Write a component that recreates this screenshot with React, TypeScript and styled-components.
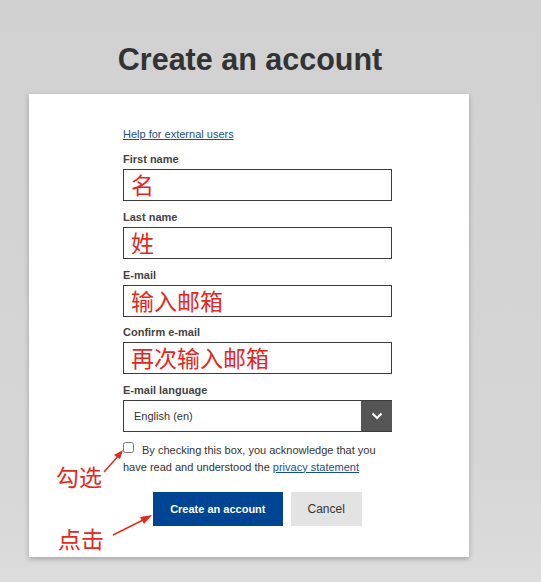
import React from "react";
import styled, { createGlobalStyle } from "styled-components";

const GlobalStyle = createGlobalStyle`
  html, body {
    margin: 0;
    padding: 0;
  }
  body {
    background: linear-gradient(#d1d1d1, #d6d6d6 80%, #dcdcdc);
    min-height: 582px;
    font-family: "Liberation Sans", Arial, sans-serif;
  }
`;

const Page = styled.div`
  width: 440px;
  margin-left: 29px;
  padding-top: 41px;
`;

const Title = styled.h1`
  margin: 0 0 17px;
  padding-left: 2px;
  text-align: center;
  font-size: 30.5px;
  line-height: 36px;
  font-weight: 700;
  color: #333;
`;

const Card = styled.div`
  position: relative;
  background: #fff;
  box-shadow: 0 2px 5px rgba(0, 0, 0, 0.25);
  padding: 33px 0 31px 94px;
`;

const Column = styled.div`
  width: 269px;
  display: flex;
  flex-direction: column;
`;

const HelpLink = styled.a`
  font-size: 11px;
  line-height: 14px;
  color: #1a4f86;
  text-decoration: underline;
  margin-bottom: 11px;
`;

const Field = styled.div`
  display: flex;
  flex-direction: column;
  margin-bottom: 8.75px;
`;

const Label = styled.label`
  font-size: 11px;
  line-height: 14px;
  font-weight: 700;
  color: #444;
  margin-bottom: 3px;
`;

const TextInput = styled.input`
  box-sizing: border-box;
  height: 32px;
  width: 100%;
  margin: 0;
  border: 1px solid #3c3c3c;
  padding: 0 0 2px 7px;
  font-family: "Noto Sans CJK SC", sans-serif;
  font-weight: 400;
  font-size: 23px;
  color: #e3281f;
  outline: none;
`;

const SelectBox = styled.div`
  box-sizing: border-box;
  height: 32px;
  display: flex;
  align-items: stretch;
  border: 1px solid #3c3c3c;
  border-right: none;
`;

const SelectValue = styled.div`
  flex: 1;
  display: flex;
  align-items: center;
  padding-left: 10px;
  font-size: 11px;
  color: #333;
`;

const SelectButton = styled.div`
  width: 31px;
  background: #555;
  display: flex;
  align-items: center;
  justify-content: center;
`;

const Consent = styled.p`
  margin: 1px 0 0;
  font-size: 11px;
  line-height: 17px;
  color: #333;
`;

const Check = styled.input`
  width: 11px;
  height: 11px;
  margin: 0 8px 0 0;
  vertical-align: 1px;
`;

const Privacy = styled.a`
  color: #1a4f86;
  text-decoration: underline;
`;

const Actions = styled.div`
  display: flex;
  justify-content: center;
  gap: 8px;
  margin-top: 16px;
`;

const Button = styled.button<{ $primary?: boolean }>`
  height: 34px;
  border: none;
  padding: 0 ${(p) => (p.$primary ? "17px" : "17px")};
  font-family: "Liberation Sans", Arial, sans-serif;
  font-size: ${(p) => (p.$primary ? "11px" : "12px")};
  font-weight: ${(p) => (p.$primary ? 700 : 400)};
  background: ${(p) => (p.$primary ? "#004494" : "#e3e3e3")};
  color: ${(p) => (p.$primary ? "#fff" : "#333")};
`;

const Note = styled.span<{ $x: number; $y: number }>`
  position: absolute;
  left: ${(p) => p.$x}px;
  top: ${(p) => p.$y}px;
  font-family: "Noto Sans CJK SC", sans-serif;
  font-weight: 400;
  font-size: 23px;
  line-height: 26px;
  color: #e3281f;
`;

const Arrows = styled.svg`
  position: absolute;
  left: 0;
  top: 0;
  pointer-events: none;
`;

export default function App() {
  return (
    <>
      <GlobalStyle />
      <Page>
        <Title>Create an account</Title>
        <Card>
          <Column>
            <HelpLink href="#">Help for external users</HelpLink>
            <Field>
              <Label>First name</Label>
              <TextInput defaultValue="名" />
            </Field>
            <Field>
              <Label>Last name</Label>
              <TextInput defaultValue="姓" />
            </Field>
            <Field>
              <Label>E-mail</Label>
              <TextInput defaultValue="输入邮箱" />
            </Field>
            <Field>
              <Label>Confirm e-mail</Label>
              <TextInput defaultValue="再次输入邮箱" />
            </Field>
            <Field>
              <Label>E-mail language</Label>
              <SelectBox>
                <SelectValue>English (en)</SelectValue>
                <SelectButton>
                  <svg width="12" height="8" viewBox="0 0 12 8">
                    <path d="M1.5 1.5 L6 6 L10.5 1.5" fill="none" stroke="#fff" strokeWidth="2" />
                  </svg>
                </SelectButton>
              </SelectBox>
            </Field>
            <Consent>
              <Check type="checkbox" />
              By checking this box, you acknowledge that you have read and understood the{" "}
              <Privacy href="#">privacy statement</Privacy>
            </Consent>
            <Actions>
              <Button $primary>Create an account</Button>
              <Button>Cancel</Button>
            </Actions>
          </Column>
          <Note $x={27} $y={369}>勾选</Note>
          <Note $x={29} $y={431}>点击</Note>
          <Arrows width="440" height="470" viewBox="0 0 440 470">
            <line x1="75" y1="378" x2="91" y2="360" stroke="#e3281f" strokeWidth="1.5" />
            <path d="M94 356 L85 361 L91 365 Z" fill="#e3281f" />
            <line x1="84" y1="441" x2="116" y2="425" stroke="#e3281f" strokeWidth="1.5" />
            <path d="M123 421 L111 423 L115 430 Z" fill="#e3281f" />
          </Arrows>
        </Card>
      </Page>
    </>
  );
}
